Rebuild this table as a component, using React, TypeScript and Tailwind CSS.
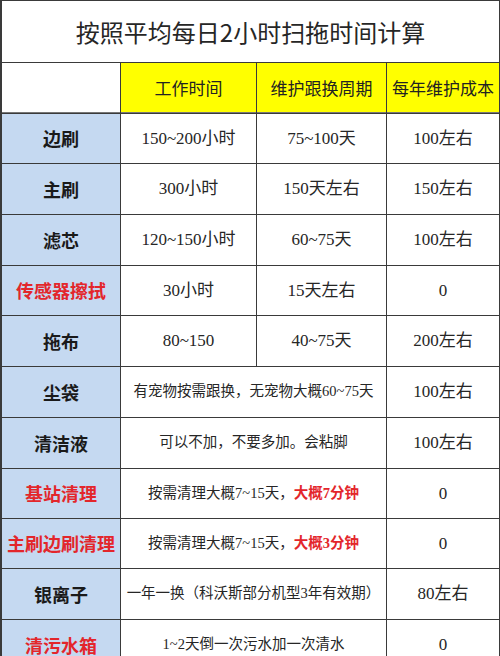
import React from "react";

const FONT = { fontFamily: '"Liberation Serif", "Noto Sans CJK SC", serif' };
const SANS = { fontFamily: '"Noto Sans CJK SC", "Noto Sans", sans-serif' };

type Row = {
  label: string;
  red?: boolean;
  work?: string;
  cycle?: string;
  merged?: React.ReactNode;
  cost: string;
};

const R = "text-[#e3262b] font-bold";

const rows: Row[] = [
  { label: "边刷", work: "150~200小时", cycle: "75~100天", cost: "100左右" },
  { label: "主刷", work: "300小时", cycle: "150天左右", cost: "150左右" },
  { label: "滤芯", work: "120~150小时", cycle: "60~75天", cost: "100左右" },
  { label: "传感器擦拭", red: true, work: "30小时", cycle: "15天左右", cost: "0" },
  { label: "拖布", work: "80~150", cycle: "40~75天", cost: "200左右" },
  { label: "尘袋", merged: "有宠物按需跟换，无宠物大概60~75天", cost: "100左右" },
  { label: "清洁液", merged: "可以不加，不要多加。会粘脚", cost: "100左右" },
  {
    label: "基站清理",
    red: true,
    merged: (
      <>
        按需清理大概7~15天，<span className={R}>大概7分钟</span>
      </>
    ),
    cost: "0",
  },
  {
    label: "主刷边刷清理",
    red: true,
    merged: (
      <>
        按需清理大概7~15天，<span className={R}>大概3分钟</span>
      </>
    ),
    cost: "0",
  },
  { label: "银离子", merged: "一年一换（科沃斯部分机型3年有效期）", cost: "80左右" },
  { label: "清污水箱", red: true, merged: "1~2天倒一次污水加一次清水", cost: "0" },
];

const cell = "flex items-center justify-center bg-white text-[#262626]";

export default function App() {
  return (
    <div
      className="w-[500px] h-[656px] overflow-hidden bg-white"
      style={FONT}
    >
      <div className="grid grid-cols-[118px_135px_129px_112px] grid-rows-[61px_50px_49px_50px_50px_49px_50px_50px_50px_49px_49px_50px_50px] gap-px bg-[#3a3a3a] pl-[2px] pr-px pt-px">
        <div
          className={`${cell} col-span-4 text-[24px] text-[#222] pt-[1px]`}
          style={SANS}
        >
          按照平均每日2小时扫拖时间计算
        </div>
        <div className="bg-white border-b border-[#777]" />
        <div
          className="flex items-center justify-center bg-[#ffff00] border-b border-[#777] text-[17px] text-[#222]"
          style={SANS}
        >
          工作时间
        </div>
        <div
          className="flex items-center justify-center bg-[#ffff00] border-b border-[#777] text-[17px] text-[#222]"
          style={SANS}
        >
          维护跟换周期
        </div>
        <div
          className="flex items-center justify-center bg-[#ffff00] border-b border-[#777] text-[17px] text-[#222] whitespace-nowrap"
          style={SANS}
        >
          每年维护成本
        </div>
        {rows.map((r, i) => (
          <React.Fragment key={i}>
            <div
              className={`flex items-center justify-center bg-[#c5d9f1] text-[18px] font-bold whitespace-nowrap ${
                r.red ? "text-[#e3262b]" : "text-[#1a1a1a]"
              }`}
              style={SANS}
            >
              {r.label}
            </div>
            {r.merged !== undefined ? (
              <div className={`${cell} col-span-2 text-[14.5px] whitespace-nowrap`}>
                {r.merged}
              </div>
            ) : (
              <>
                <div className={`${cell} text-[17px] whitespace-nowrap`}>{r.work}</div>
                <div className={`${cell} text-[17px] whitespace-nowrap`}>{r.cycle}</div>
              </>
            )}
            <div className={`${cell} text-[17px] whitespace-nowrap`}>{r.cost}</div>
          </React.Fragment>
        ))}
      </div>
    </div>
  );
}
